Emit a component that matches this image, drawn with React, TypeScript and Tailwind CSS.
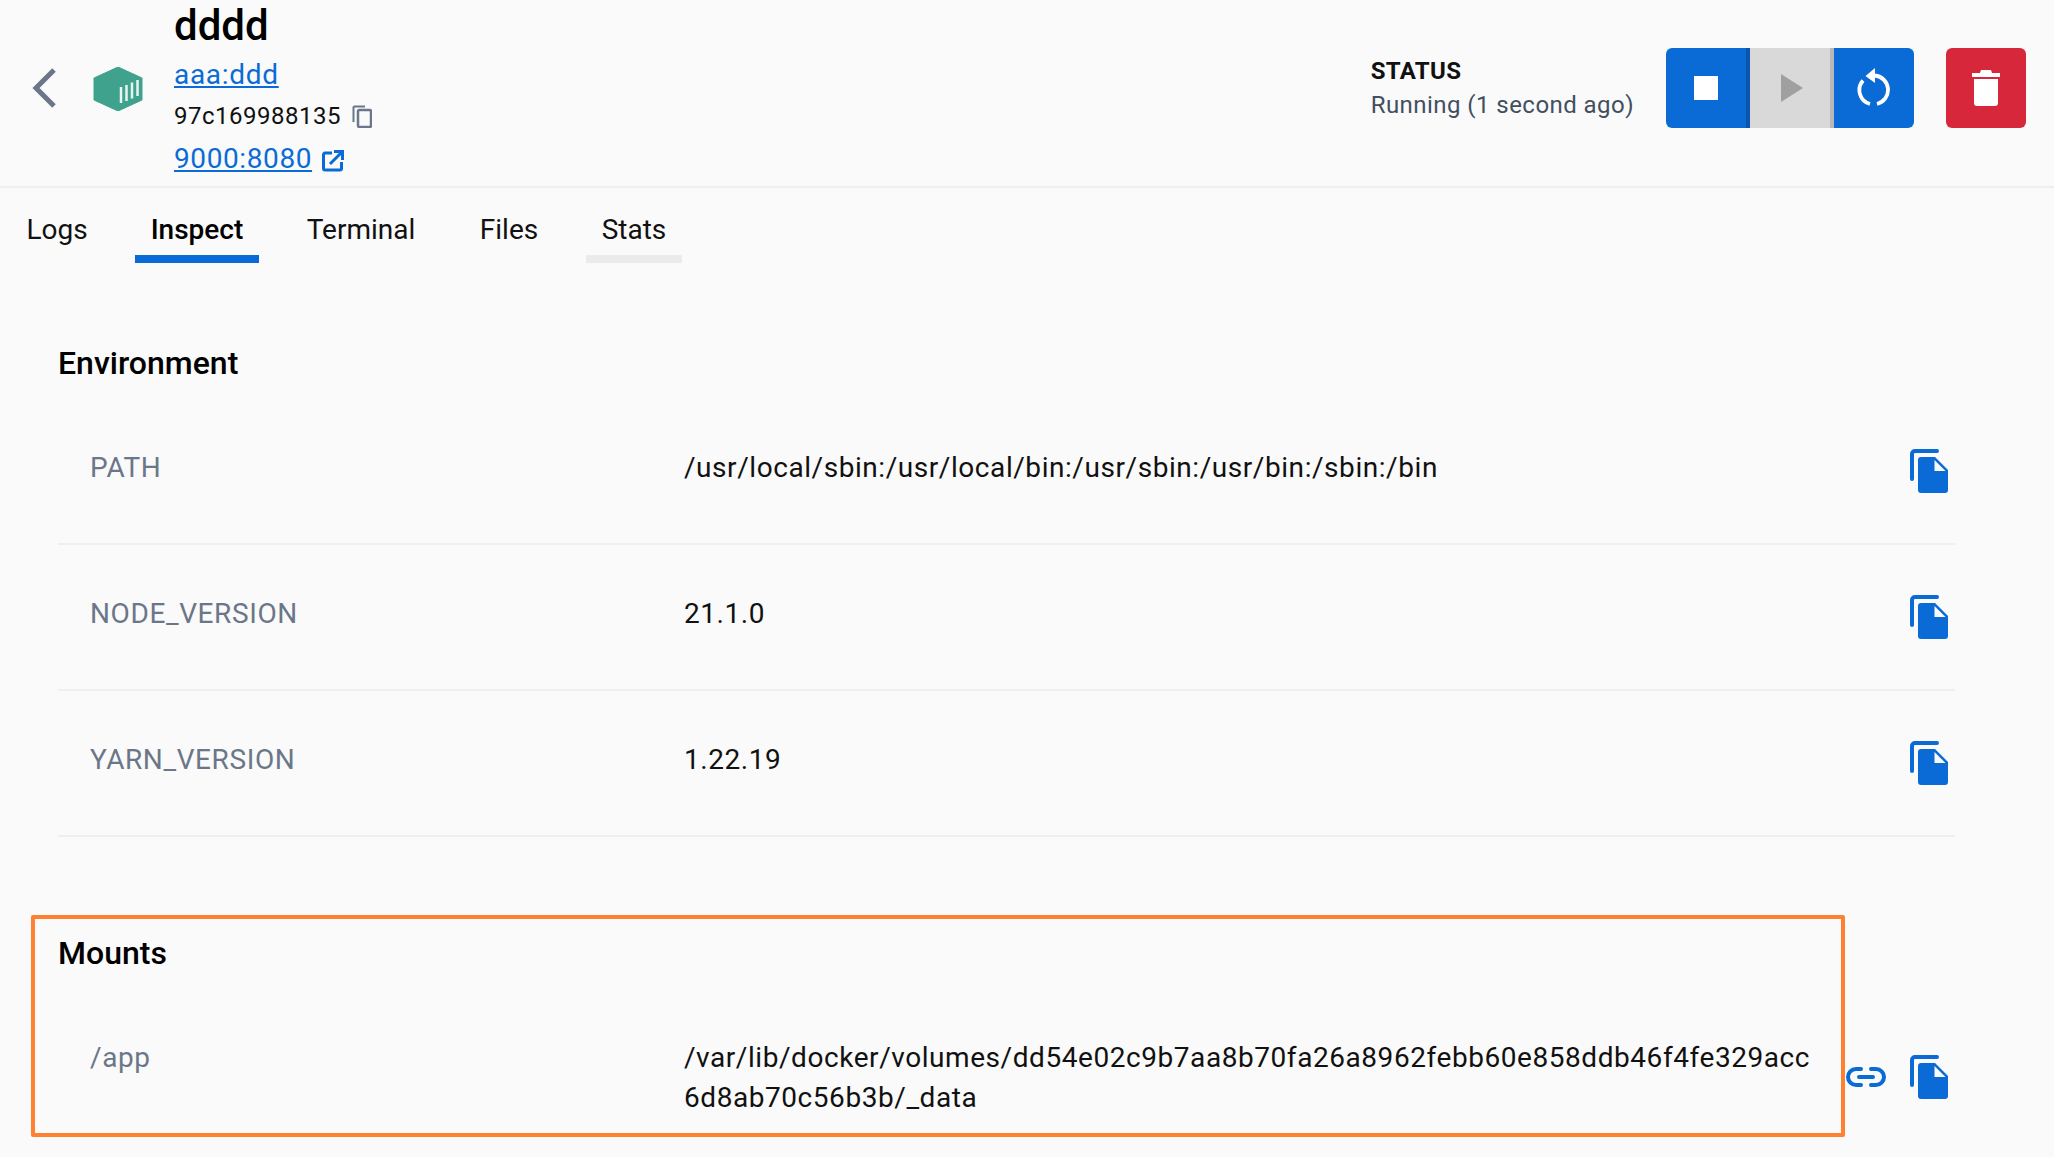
const CopyDoc = () => (
  <svg width="38" height="44" viewBox="0 0 38 44" className="block">
    <path d="M2 30V5a3 3 0 0 1 3-3h22" fill="none" stroke="#0b6bd6" strokeWidth="4" strokeLinecap="round" />
    <path d="M11 8h14l13 13v20a3 3 0 0 1-3 3H11a3 3 0 0 1-3-3V11a3 3 0 0 1 3-3z" fill="#0b6bd6" />
    <path d="M24.500 11v11h11z" fill="#fafafa" />
  </svg>
);

const LinkIcon = () => (
  <svg width="40" height="20" viewBox="0 0 40 20" className="block">
    <path d="M15 2H10a8 8 0 0 0 0 16h5M25 2h5a8 8 0 0 1 0 16h-5M13 10h14" fill="none" stroke="#0b6bd6" strokeWidth="4" strokeLinecap="round" />
  </svg>
);

const rows = [
  { k: "PATH", v: "/usr/local/sbin:/usr/local/bin:/usr/sbin:/usr/bin:/sbin:/bin" },
  { k: "NODE_VERSION", v: "21.1.0" },
  { k: "YARN_VERSION", v: "1.22.19" },
];

export default function App() {
  return (
    <div className="relative h-[1157px] w-full overflow-hidden bg-[#fafafa] font-['Roboto',sans-serif] text-[#111]">
      <header className="flex h-[188px] items-start border-b-2 border-[#efefef]">
        <svg width="24" height="40" viewBox="0 0 24 40" className="ml-[32px] mt-[68px] shrink-0">
          <path d="M22 2L4 20l18 18" fill="none" stroke="#6b7788" strokeWidth="5" />
        </svg>
        <svg width="50" height="44" viewBox="0 0 50 44" className="ml-[37px] mt-[67px] shrink-0">
          <path d="M25 0l24 11v22L25 44 1 33V11z" fill="#3fa28c" stroke="#3fa28c" strokeLinejoin="round" />
          <path d="M28 20v16M33.500 18v16M39 15.500v16M44.500 13v16" stroke="#e8f4f1" strokeWidth="2.500" fill="none" />
        </svg>
        <div className="ml-[31px] flex flex-col">
          <div className="h-[50px] pt-[1px] text-[42px] font-medium leading-[50px] text-black">dddd</div>
          <a className="h-[42px] text-[28px] leading-[50px] tracking-[0.7px] text-[#0b6bd6] underline">aaa:ddd</a>
          <div className="mt-[3px] flex h-[42px] items-center gap-[11px] text-[24px] tracking-[0.5px] text-[#111]">
            97c169988135
            <svg width="20" height="23" viewBox="0 0 20 23">
              <path d="M1.500 17V2.500a1 1 0 0 1 1-1H13" fill="none" stroke="#6b7788" strokeWidth="2" />
              <rect x="6" y="5" width="13" height="17" rx="1.500" fill="none" stroke="#6b7788" strokeWidth="2.500" />
            </svg>
          </div>
          <div className="mt-[1px] flex h-[42px] items-center gap-[10px] text-[28px] tracking-[0.6px]">
            <a className="text-[#0b6bd6] underline">9000:8080</a>
            <svg width="22" height="22" viewBox="0 0 22 22" className="mt-[4px]">
              <path d="M10 3H3a1.500 1.500 0 0 0-1.500 1.500v14A1.500 1.500 0 0 0 3 20h15a1.500 1.500 0 0 0 1.500-1.500V12M8 14L20 2M12 1.500h8.500V10" fill="none" stroke="#0b6bd6" strokeWidth="3" />
            </svg>
          </div>
        </div>
        <div className="ml-auto mt-[48px] flex items-start">
          <div className="flex h-[80px] flex-col pt-[5px]">
            <div className="text-[24px] font-bold leading-[36px] tracking-[0.35px] text-[#111]">STATUS</div>
            <div className="text-[24px] leading-[33px] tracking-[0.45px] text-[#424f5e]">Running (1 second ago)</div>
          </div>
          <div className="ml-[32px] flex h-[80px] overflow-hidden rounded-[6px]">
            <div className="flex w-[84px] items-center justify-center border-r-4 border-[#0a55ad] bg-[#0b6bd6]">
              <div className="h-[24px] w-[24px] bg-white" />
            </div>
            <div className="flex w-[84px] items-center justify-center border-r-4 border-[#b8b8b8] bg-[#d9d9d9]">
              <svg width="24" height="28" viewBox="0 0 24 28" className="ml-[4px]"><path d="M1 0l22 14L1 28z" fill="#a0a0a0" /></svg>
            </div>
            <div className="flex w-[80px] items-center justify-center bg-[#0b6bd6]">
              <svg width="34" height="40" viewBox="0 0 34 40">
                <path d="M18 7.500A14.500 14.500 0 0 1 20 36M13 36A14.500 14.500 0 0 1 6 12.500" fill="none" stroke="#fff" strokeWidth="3.800" />
                <path d="M18 0v15L8.500 8z" fill="#fff" />
              </svg>
            </div>
          </div>
          <div className="ml-[32px] mr-[28px] flex h-[80px] w-[80px] items-center justify-center rounded-[6px] bg-[#d7283b]">
            <svg width="28" height="36" viewBox="0 0 28 36">
              <path d="M0 3h8l1-3h10l1 3h8v4H0zM2 9h24v24a3 3 0 0 1-3 3H5a3 3 0 0 1-3-3z" fill="#fff" />
            </svg>
          </div>
        </div>
      </header>

      <nav className="flex h-[75px] items-end pl-[9px]">
        <div className="flex h-[75px] w-[96px] items-center justify-center border-b-[8px] border-transparent pt-[16px] text-[28px]">Logs</div>
        <div className="ml-[30px] flex h-[75px] w-[124px] items-center justify-center border-b-[8px] border-[#0b6bd6] pt-[16px] text-[28px] font-medium text-black">Inspect</div>
        <div className="ml-[28px] flex h-[75px] w-[148px] items-center justify-center border-b-[8px] border-transparent pt-[16px] text-[28px]">Terminal</div>
        <div className="ml-[29px] flex h-[75px] w-[90px] items-center justify-center border-b-[8px] border-transparent pt-[16px] text-[28px]">Files</div>
        <div className="ml-[32px] flex h-[75px] w-[96px] items-center justify-center border-b-[8px] border-[#ebebeb] pt-[16px] text-[28px]">Stats</div>
      </nav>

      <main className="pl-[58px] pr-[99px] pt-[78px]">
        <h2 className="h-[44px] text-[32px] font-medium leading-[44px] text-black">Environment</h2>
        <div className="mt-[14px]">
          {rows.map((r) => (
            <div key={r.k} className="flex h-[146px] items-center border-b-2 border-[#efefef] pb-[6px]">
              <div className="w-[626px] shrink-0 pl-[32px] text-[28px] tracking-[0.6px] text-[#6b7788]">{r.k}</div>
              <div className="grow text-[28px] tracking-[0.56px] text-[#111]">{r.v}</div>
              <div className="mr-[7px] mt-[6px] shrink-0"><CopyDoc /></div>
            </div>
          ))}
        </div>
        <h2 className="mt-[94px] h-[44px] text-[32px] font-medium leading-[44px] text-black">Mounts</h2>
        <div className="mt-[63px] flex">
          <div className="w-[626px] shrink-0 pl-[32px] text-[28px] leading-[40px] tracking-[0.6px] text-[#6b7788]">/app</div>
          <div className="w-[1134px] shrink-0 break-all text-[28px] leading-[40px] tracking-[0.56px] text-[#111]">/var/lib/docker/volumes/dd54e02c9b7aa8b70fa26a8962febb60e858ddb46f4fe329acc6d8ab70c56b3b/_data</div>
          <div className="ml-auto mr-[7px] flex items-center gap-[24px] pb-[2px]">
            <LinkIcon />
            <CopyDoc />
          </div>
        </div>
      </main>

      <div className="absolute left-[31px] top-[915px] h-[222px] w-[1814px] rounded-[2px] border-4 border-[#ff8030]" />
    </div>
  );
}
